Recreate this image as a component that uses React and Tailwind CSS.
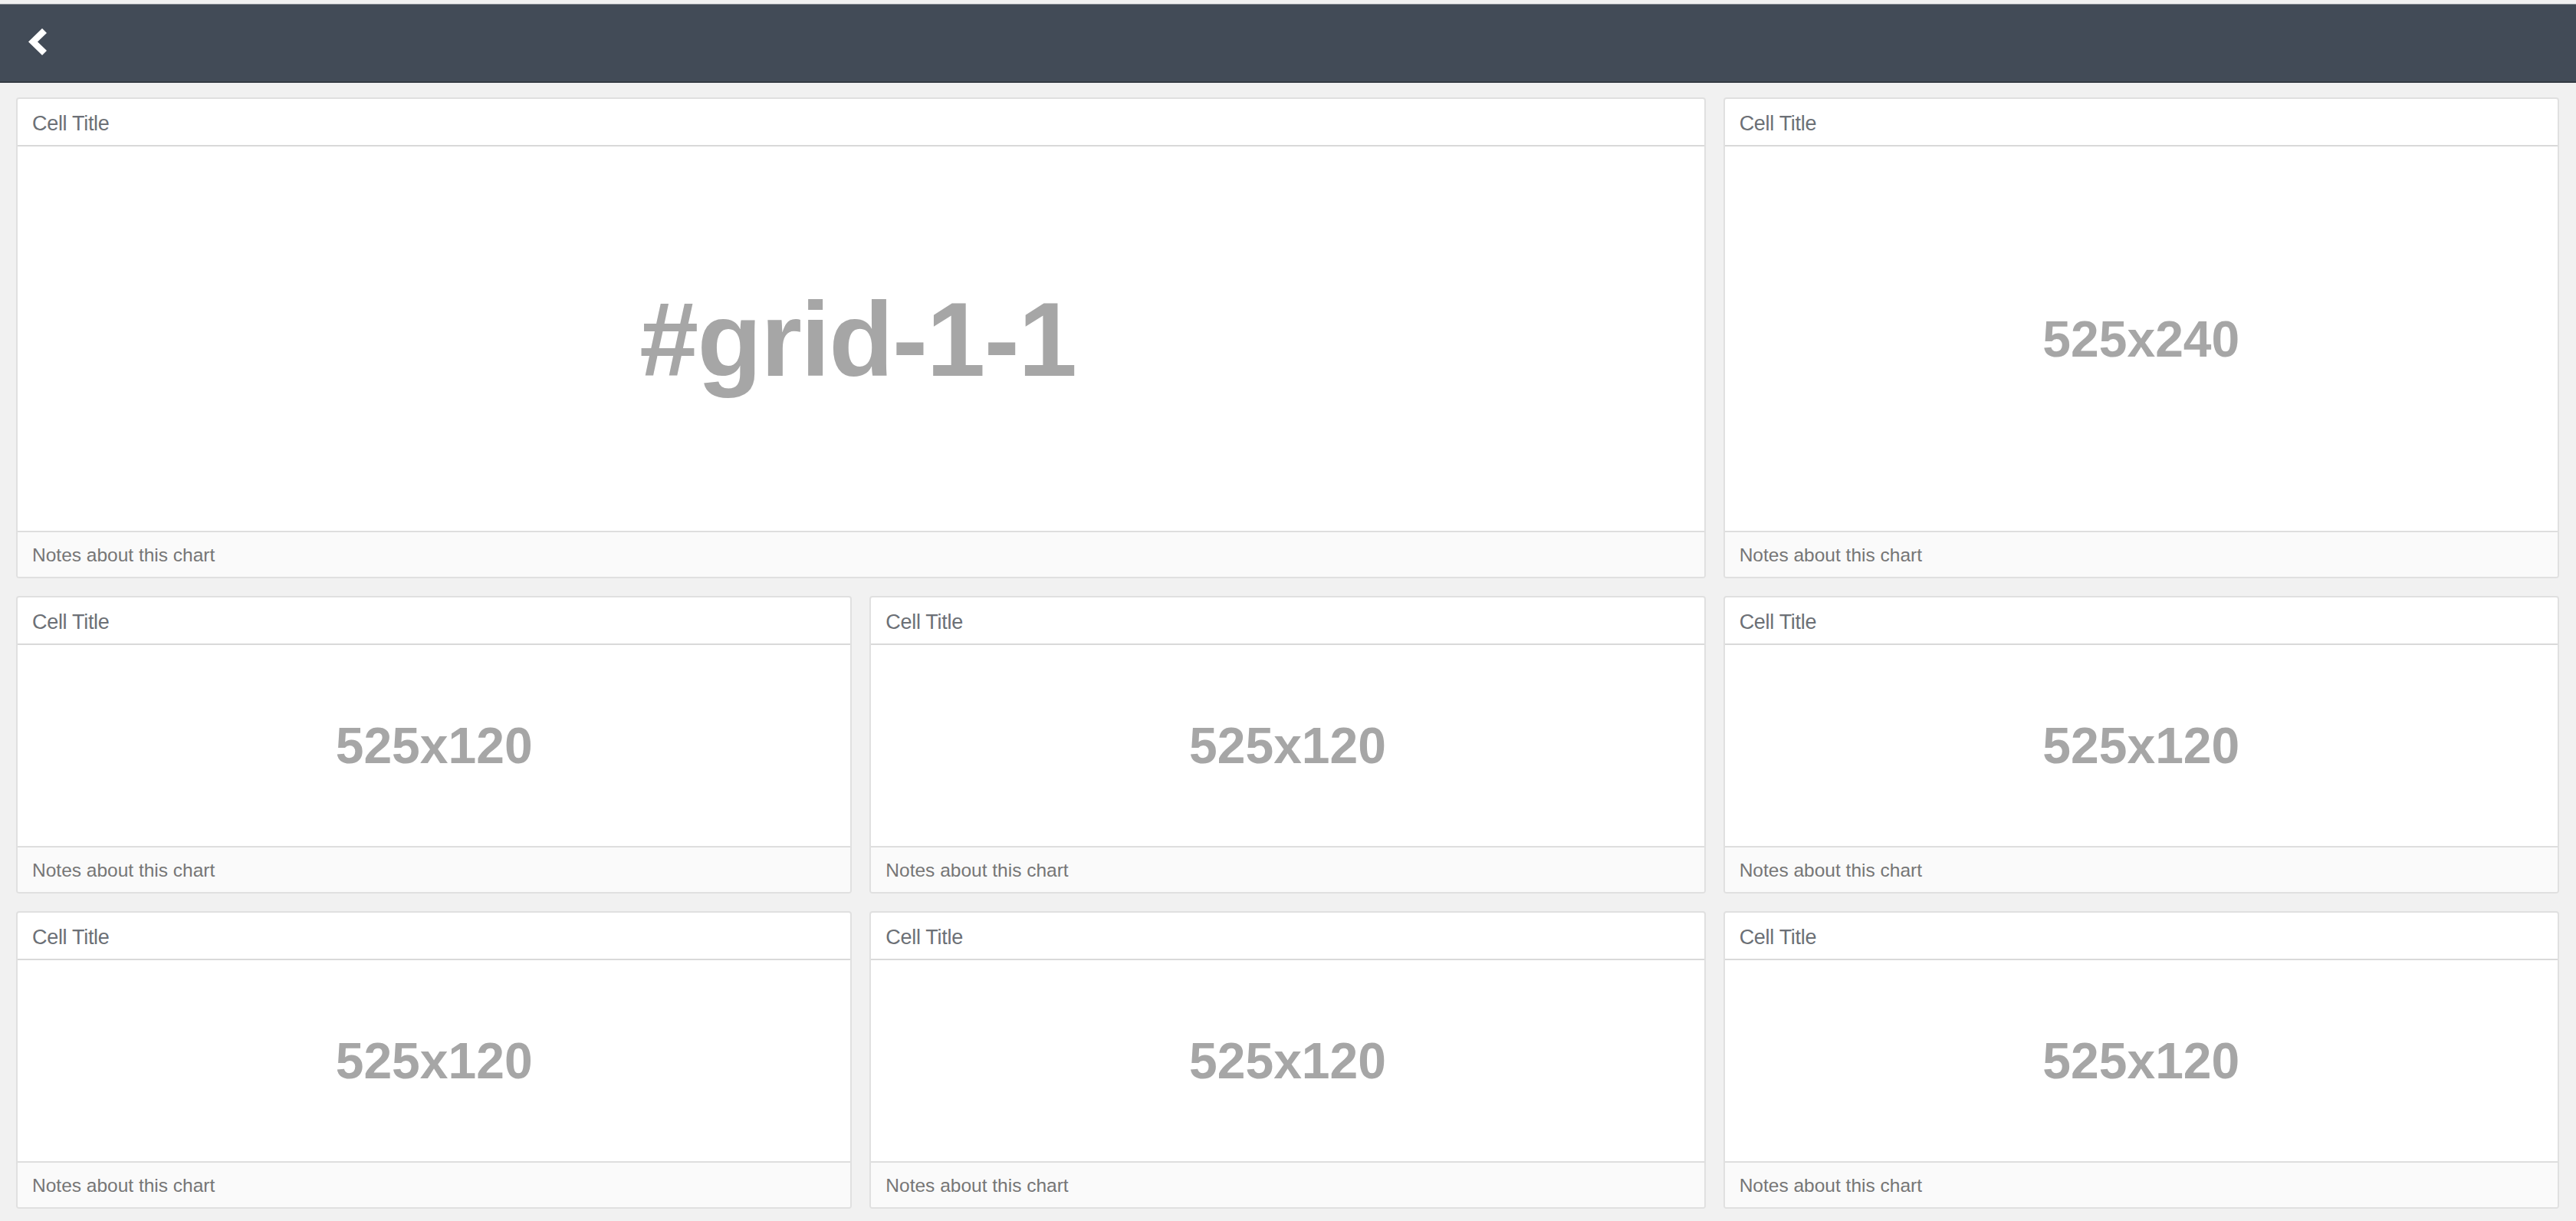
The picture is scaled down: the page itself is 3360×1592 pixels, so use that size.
const cells = [
  { id: 'grid-1-1', label: '#grid-1-1', big: true },
  { id: 'grid-1-2', label: '525x240' },
  { id: 'grid-2-1', label: '525x120' },
  { id: 'grid-2-2', label: '525x120' },
  { id: 'grid-2-3', label: '525x120' },
  { id: 'grid-3-1', label: '525x120' },
  { id: 'grid-3-2', label: '525x120' },
  { id: 'grid-3-3', label: '525x120' },
];

function Cell({ label, big }) {
  return (
    <div
      className={`flex flex-col bg-white border-2 border-[#e0e0e0] rounded-[4px] overflow-hidden ${
        big ? 'col-span-2' : ''
      }`}
    >
      <div className="h-[62px] shrink-0 flex items-center px-[19px] pt-[5px] border-b-2 border-[#d9d9d9]">
        <span className="text-[27px] text-[#6c7076] tracking-[-0.3px]">Cell Title</span>
      </div>
      <div className="flex-1 flex items-center justify-center">
        <span
          className={`font-bold text-[#a6a6a6] leading-none ${
            big ? 'text-[138px] tracking-[-1.5px] mr-[8px]' : 'text-[66px]'
          }`}
        >
          {label}
        </span>
      </div>
      <div className="h-[60px] shrink-0 flex items-center px-[19px] pt-[3px] bg-[#fafafa] border-t-2 border-[#dedede]">
        <span className="text-[24.5px] text-[#767676]">Notes about this chart</span>
      </div>
    </div>
  );
}

export default function App() {
  return (
    <div
      className="min-h-screen bg-[#f1f1f1] pt-[5px]"
      style={{ fontFamily: '"Liberation Sans", Arial, sans-serif' }}
    >
      <header className="h-[103px] bg-[#424b57] border-t border-[#8a8f96] border-b-2 border-b-[#333a42] flex items-center pl-[36px]">
        <svg width="26" height="36" viewBox="0 0 26 36" className="-mt-[2px]">
          <polygon points="19,0 25,6 13,17.5 25,29 19,35 1,17.5" fill="#ffffff" />
        </svg>
      </header>

      <div className="pl-[21px] pr-[22px] pt-[19px] pb-[16px] grid grid-cols-3 grid-rows-[627px_388px_388px] gap-[23px]">
        {cells.map((c) => (
          <Cell key={c.id} label={c.label} big={c.big} />
        ))}
      </div>
    </div>
  );
}
